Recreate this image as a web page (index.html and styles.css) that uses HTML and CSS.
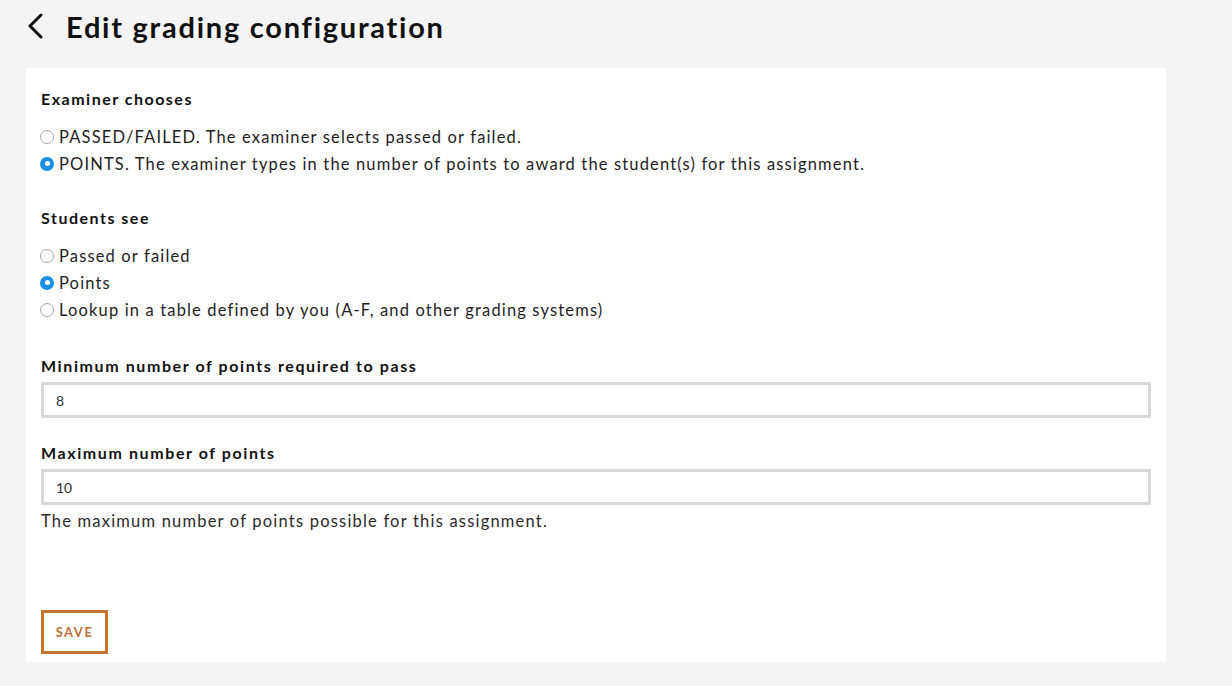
FILE: index.html
```html
<!DOCTYPE html>
<html lang="en">
<head>
<meta charset="utf-8">
<title>Edit grading configuration</title>
<link rel="stylesheet" href="styles.css">
</head>
<body>
<header class="page-header">
  <a class="back" href="#" aria-label="Back">
    <svg width="20" height="26" viewBox="0 0 20 26"><path d="M16 2 L5 13 L16 24" fill="none" stroke="#111" stroke-width="3" stroke-linecap="round" stroke-linejoin="round"/></svg>
  </a>
  <h1 class="title">Edit grading configuration</h1>
</header>
<main class="panel">
  <section class="group">
    <h3 class="group-title">Examiner chooses</h3>
    <label class="radio-row"><span class="radio"></span>PASSED/FAILED. The examiner selects passed or failed.</label>
    <label class="radio-row"><span class="radio checked"></span>POINTS. The examiner types in the number of points to award the student(s) for this assignment.</label>
  </section>
  <section class="group group-second">
    <h3 class="group-title">Students see</h3>
    <label class="radio-row"><span class="radio"></span>Passed or failed</label>
    <label class="radio-row"><span class="radio checked"></span>Points</label>
    <label class="radio-row"><span class="radio"></span>Lookup in a table defined by you (A-F, and other grading systems)</label>
  </section>
  <div class="field field-min">
    <label class="field-label">Minimum number of points required to pass</label>
    <div class="input">8</div>
  </div>
  <div class="field field-max">
    <label class="field-label">Maximum number of points</label>
    <div class="input">10</div>
    <p class="help">The maximum number of points possible for this assignment.</p>
  </div>
  <button class="save">SAVE</button>
</main>
</body>
</html>
```
FILE: styles.css
```css
* { box-sizing: border-box; }
body {
  margin: 0;
  background: #f4f4f4;
  font-family: "Lato", "Noto Sans", sans-serif;
  color: #1e1e1e;
  width: 1232px;
  height: 686px;
  overflow: hidden;
}
.page-header {
  height: 52px;
  display: flex;
  align-items: center;
  padding-left: 25px;
}
.back { display: flex; width: 20px; height: 26px; margin-right: 21px; }
.title {
  margin: 0;
  font-size: 29px;
  font-weight: 700;
  letter-spacing: 1.75px;
  color: #111;
}
.panel {
  margin: 16px 0 0 26px;
  width: 1140px;
  background: #fff;
  padding: 21px 15px 8px 15px;
}
.group-title {
  margin: 0 0 14px 0;
  font-size: 16px;
  line-height: 20px;
  font-weight: 700;
  letter-spacing: 1.5px;
  color: #111;
}
.group-second { margin-top: 31px; }
.radio-row {
  display: flex;
  align-items: center;
  height: 27px;
  font-size: 16.5px;
  letter-spacing: 1.15px;
  color: #1e1e1e;
}
.radio {
  width: 14px;
  height: 14px;
  border-radius: 50%;
  border: 1px solid #a8a8a8;
  margin: 0 5px 0 -1px;
  flex: none;
  background: #fff;
}
.radio.checked {
  border: none;
  background: #1b8fe6;
  display: flex;
  align-items: center;
  justify-content: center;
}
.radio.checked::after {
  content: "";
  width: 5px;
  height: 5px;
  border-radius: 50%;
  background: #fff;
}
.field-min { margin-top: 33px; }
.field-max { margin-top: 25px; }
.field-label {
  display: block;
  font-size: 16px;
  line-height: 20px;
  font-weight: 700;
  letter-spacing: 1.6px;
  color: #111;
  margin-bottom: 6px;
}
.input {
  height: 36px;
  border: 3px solid #d8d8d8;
  padding: 0 12px;
  display: flex;
  align-items: center;
  font-size: 14px;
  color: #333;
}
.help {
  margin: 6px 0 0 0;
  font-size: 16.5px;
  line-height: 20px;
  letter-spacing: 1.2px;
  color: #2b2b2b;
}
.save {
  margin-top: 79px;
  width: 67px;
  height: 44px;
  background: #fff;
  border: 3px solid #c8722e;
  color: #c4703a;
  font-family: inherit;
  font-weight: 700;
  font-size: 13px;
  letter-spacing: 1.5px;
  padding: 0;
  display: block;
}
```
